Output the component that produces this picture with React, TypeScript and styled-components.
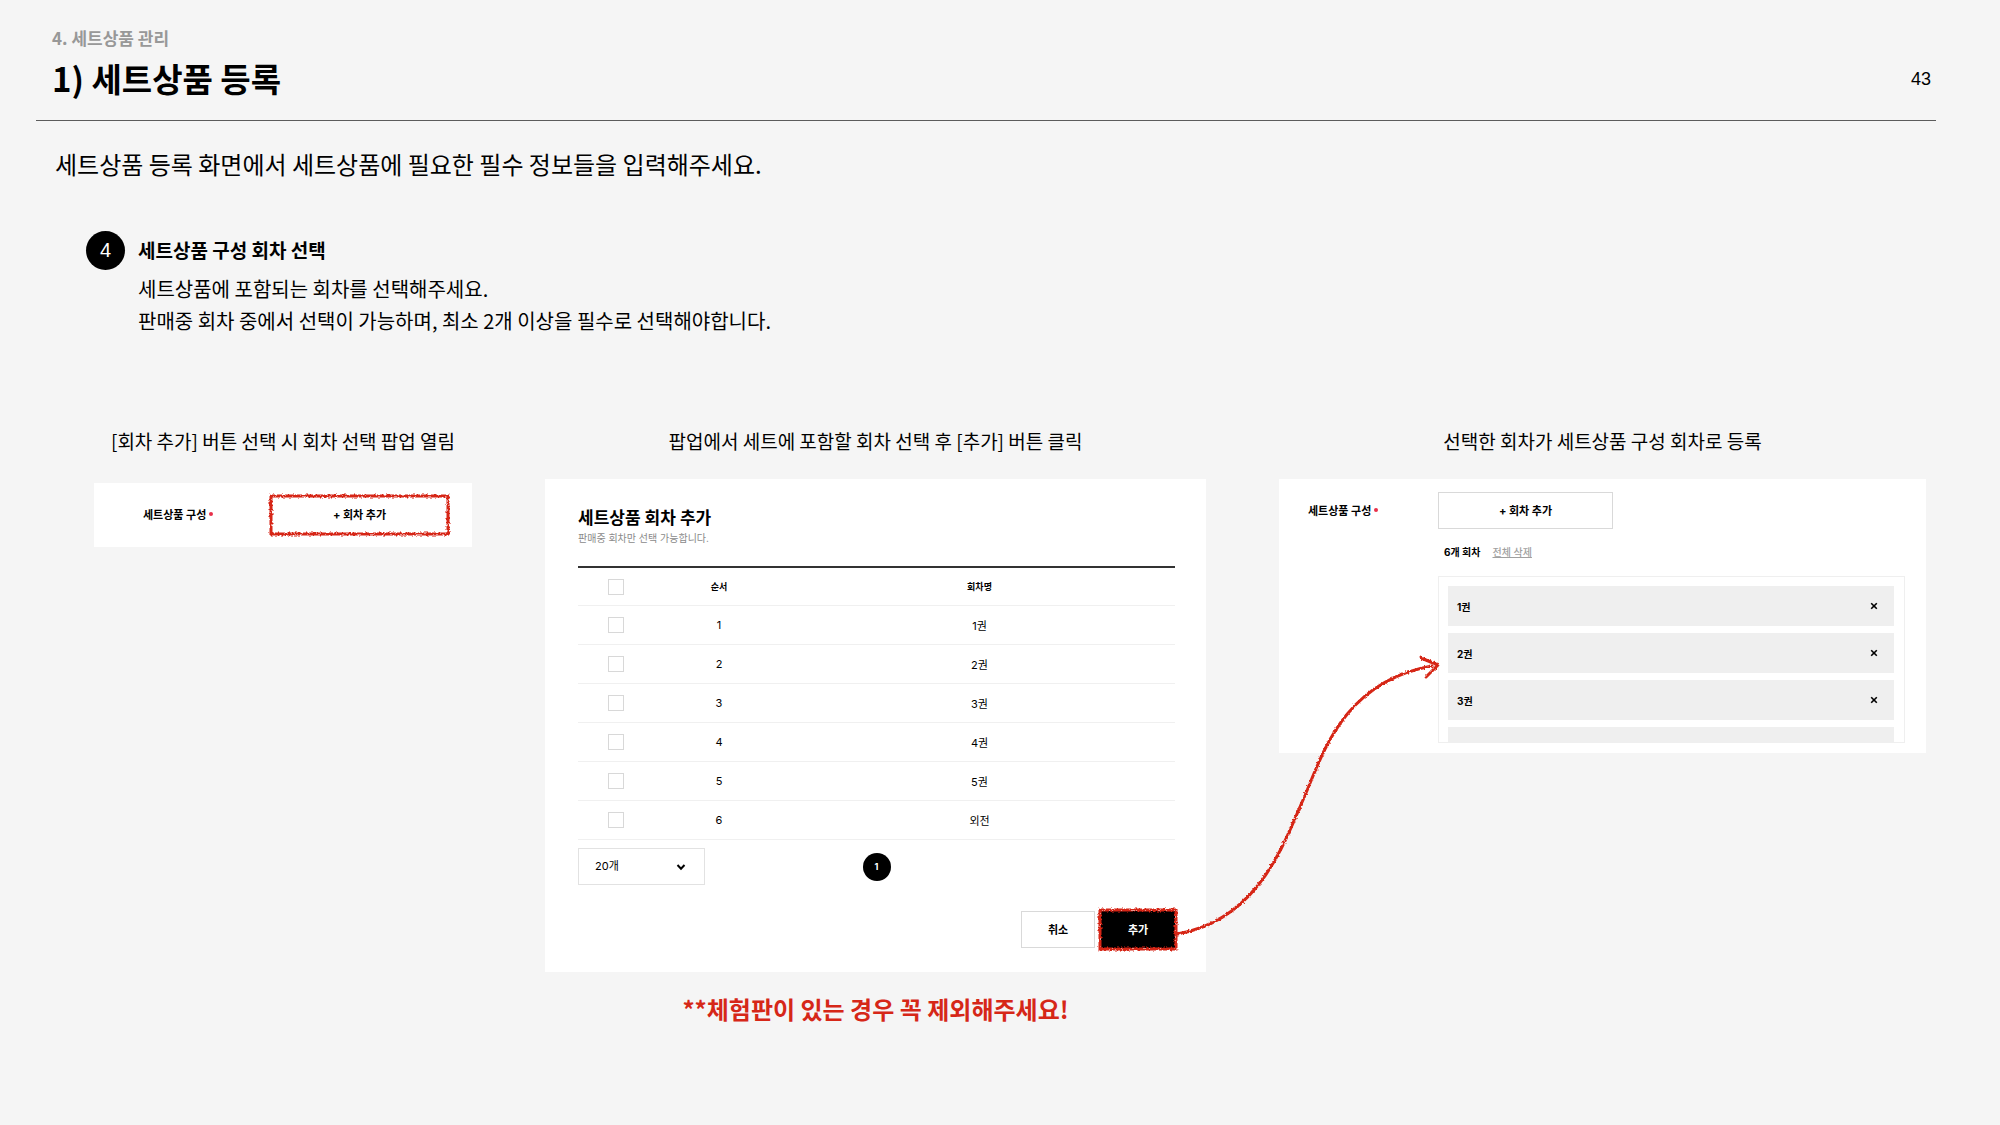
import React from "react";
import styled, { createGlobalStyle } from "styled-components";

const docFont = '"Noto Sans CJK KR", "Liberation Sans", sans-serif';
const uiFont = '"Inter", "Noto Sans CJK KR", sans-serif';
const red = "#d62718";

const GlobalStyle = createGlobalStyle`
  *, *::before, *::after { box-sizing: border-box; }
  body {
    margin: 0;
    background: #f5f5f5;
    color: #000;
    font-family: ${docFont};
  }
  h1, h2, h3, p, ol, ul { margin: 0; padding: 0; }
  ol, ul { list-style: none; }
  button, select, input { font: inherit; color: inherit; margin: 0; }
`;

const Page = styled.main`
  min-height: 100vh;
  padding-bottom: 48px;
`;

const Header = styled.header`
  display: flex;
  align-items: center;
  justify-content: space-between;
  margin: 0 64px 0 36px;
  padding: 26px 5px 20px 16px;
  border-bottom: 1px solid #5c5c5c;
`;

const Breadcrumb = styled.p`
  font-size: 17px;
  line-height: 24px;
  font-weight: 700;
  color: #989898;
`;

const Title = styled.h1`
  margin-top: 6px;
  font-size: 33px;
  line-height: 44px;
  font-weight: 700;
`;

const PageNumber = styled.span`
  font-family: "Liberation Sans", sans-serif;
  font-size: 18px;
  line-height: 24px;
  padding-top: 32px;
`;

const Lead = styled.p`
  margin: 25px 64px 0 55px;
  font-size: 24px;
  line-height: 36px;
`;

const Point = styled.section`
  display: grid;
  grid-template-columns: 39px 1fr;
  column-gap: 13px;
  align-items: center;
  margin: 49px 64px 0 86px;
`;

const PointNumber = styled.span`
  display: flex;
  align-items: center;
  justify-content: center;
  height: 39px;
  border-radius: 50%;
  background: #000;
  color: #fff;
  font-family: "Liberation Sans", sans-serif;
  font-size: 20px;
`;

const PointTitle = styled.h2`
  padding-bottom: 2px;
  font-size: 19px;
  line-height: 32px;
  font-weight: 700;
`;

const PointText = styled.p`
  grid-column: 2;
  margin-top: 3px;
  font-size: 20px;
  line-height: 32px;
`;

const Steps = styled.ol`
  display: grid;
  grid-template-columns: 378fr 661fr 647fr;
  column-gap: 73px;
  align-items: start;
  margin: 90px 74px 0 94px;
`;

const Step = styled.li`
  display: flex;
  flex-direction: column;
`;

const Caption = styled.h3<{ $gap?: number }>`
  margin-bottom: ${(p) => p.$gap ?? 24}px;
  font-size: 19px;
  line-height: 28px;
  font-weight: 400;
  text-align: center;
`;

const Card = styled.div<{ $padding: string }>`
  position: relative;
  padding: ${(p) => p.$padding};
  background: #fff;
  font-family: ${uiFont};
  font-size: 11px;
`;

const Field = styled.div<{ $label: number; $row: number }>`
  display: grid;
  grid-template-columns: ${(p) => p.$label}px 1fr;
  align-items: start;

  & > :first-child { height: ${(p) => p.$row}px; }
`;

const FieldLabel = styled.div`
  display: flex;
  align-items: center;
  gap: 3px;
  padding-bottom: 2px;
  font-weight: 700;
`;

const Required = styled.span`
  width: 4px;
  height: 4px;
  border-radius: 50%;
  background: #e8304a;
`;

const Button = styled.button<{ $dark?: boolean; $plain?: boolean; $width?: string; $height?: number }>`
  position: relative;
  width: ${(p) => p.$width ?? "100%"};
  height: ${(p) => p.$height ?? 37}px;
  padding: 0 0 2px;
  border: 1px solid ${(p) => (p.$dark ? "#000" : p.$plain ? "#fff" : "#d9d9d9")};
  background: ${(p) => (p.$dark ? "#000" : "#fff")};
  color: ${(p) => (p.$dark ? "#fff" : "#000")};
  font-weight: 700;
  cursor: pointer;
`;

const FrameSvg = styled.svg<{ $out: number }>`
  position: absolute;
  inset: ${(p) => -p.$out}px;
  width: calc(100% + ${(p) => p.$out * 2}px);
  height: calc(100% + ${(p) => p.$out * 2}px);
  overflow: visible;
  pointer-events: none;

  rect {
    width: 100%;
    height: 100%;
  }
`;

const ArrowSvg = styled.svg`
  position: absolute;
  left: -119px;
  top: 161px;
  pointer-events: none;
`;

const FilterSvg = styled.svg`
  position: absolute;
  width: 0;
  height: 0;
`;

const PopupTitle = styled.h4`
  margin: 0;
  font-size: 17px;
  line-height: 24px;
  font-weight: 700;
`;

const PopupNote = styled.p`
  margin-top: 1px;
  font-size: 10px;
  line-height: 14px;
  color: #8a8a8a;
`;

const Table = styled.table`
  width: 100%;
  margin-top: 21px;
  table-layout: fixed;
  border-spacing: 0;
  border-top: 2px solid #333;
  text-align: center;

  th, td {
    height: 39px;
    padding: 0;
    border-bottom: 1px solid #f0f0f0;
    vertical-align: middle;
  }
  th {
    height: 38px;
    font-size: 9px;
    font-weight: 700;
  }
`;

const CheckColumn = styled.col`
  width: 76px;
`;

const OrderColumn = styled.col`
  width: 130px;
`;

const Check = styled.input`
  display: block;
  width: 16px;
  height: 16px;
  margin: 0 auto;
  appearance: none;
  border: 1px solid #d8d8d8;
  background: #fff;

  &:checked { background: #000; }
`;

const Pager = styled.div`
  display: grid;
  grid-template-columns: 1fr auto 1fr;
  align-items: center;
  margin-top: 8px;
`;

const SelectBox = styled.div`
  position: relative;
  width: 127px;

  select {
    width: 100%;
    height: 37px;
    padding: 0 16px 2px;
    appearance: none;
    border: 1px solid #e2e2e2;
    border-radius: 0;
    background: #fff;
  }
  svg {
    position: absolute;
    right: 19px;
    top: 14px;
    pointer-events: none;
  }
`;

const PageButton = styled.button`
  width: 28px;
  height: 28px;
  padding: 0;
  border: 0;
  border-radius: 50%;
  background: #000;
  color: #fff;
  font-size: 9px;
  font-weight: 700;
`;

const Actions = styled.div`
  display: flex;
  justify-content: flex-end;
  gap: 6px;
  margin-top: 26px;
`;

const Warning = styled.p`
  margin-top: 19px;
  font-size: 24px;
  line-height: 36px;
  font-weight: 700;
  color: ${red};
  text-align: center;
`;

const Summary = styled.div`
  display: flex;
  gap: 12px;
  margin-top: 15px;
  padding-left: 6px;
  font-size: 10px;
  line-height: 16px;
  font-weight: 700;
`;

const ClearButton = styled.button`
  padding: 0;
  border: 0;
  background: none;
  color: #a0a0a0;
  font-size: 10px;
  font-weight: 500;
  text-decoration: underline;
`;

const Picked = styled.ul`
  display: flex;
  flex-direction: column;
  gap: 7px;
  height: 167px;
  margin-top: 16px;
  padding: 9px 10px 9px 9px;
  overflow-y: auto;
  scrollbar-width: none;
  border: 1px solid #efefef;
`;

const PickedItem = styled.li`
  display: flex;
  flex: none;
  align-items: center;
  justify-content: space-between;
  height: 40px;
  padding: 0 16px 0 9px;
  background: #efefef;
  font-size: 10px;
  font-weight: 700;
`;

const RemoveButton = styled.button`
  display: flex;
  padding: 0;
  border: 0;
  background: none;
`;

const volumes = ["1권", "2권", "3권", "4권", "5권", "외전"];

function CrayonFrame({ out }: { out: number }) {
  return (
    <FrameSvg $out={out} aria-hidden="true">
      <rect fill="none" stroke={red} strokeWidth="3" filter="url(#crayon)" />
    </FrameSvg>
  );
}

function CrayonFilters() {
  return (
    <FilterSvg aria-hidden="true">
      <filter id="crayon" x="-10" y="-10" width="400" height="400" filterUnits="userSpaceOnUse">
        <feTurbulence type="fractalNoise" baseFrequency="0.45" numOctaves="2" seed="4" result="noise" />
        <feDisplacementMap in="SourceGraphic" in2="noise" scale="4" xChannelSelector="R" yChannelSelector="G" />
      </filter>
      <filter id="crayon-soft" x="0" y="0" width="400" height="400" filterUnits="userSpaceOnUse">
        <feTurbulence type="fractalNoise" baseFrequency="0.5" numOctaves="2" seed="7" result="noise" />
        <feDisplacementMap in="SourceGraphic" in2="noise" scale="3" xChannelSelector="R" yChannelSelector="G" />
      </filter>
    </FilterSvg>
  );
}

function Arrow() {
  return (
    <ArrowSvg width="290" height="310" viewBox="0 0 290 310" aria-hidden="true">
      <g fill="none" stroke={red} strokeWidth="3" strokeLinecap="round" strokeLinejoin="round" filter="url(#crayon-soft)">
        <path d="M17 294C100 280 125 200 143 160C161 120 180 42 272 26" />
        <path d="M261 18L278 25L266 37" />
      </g>
    </ArrowSvg>
  );
}

function SetLabel() {
  return (
    <FieldLabel>
      세트상품 구성
      <Required />
    </FieldLabel>
  );
}

function AddPopup() {
  return (
    <Card $padding="27px 31px 24px 33px">
      <PopupTitle>세트상품 회차 추가</PopupTitle>
      <PopupNote>판매중 회차만 선택 가능합니다.</PopupNote>
      <Table>
        <colgroup>
          <CheckColumn />
          <OrderColumn />
          <col />
        </colgroup>
        <thead>
          <tr>
            <th><Check type="checkbox" aria-label="전체 선택" /></th>
            <th>순서</th>
            <th>회차명</th>
          </tr>
        </thead>
        <tbody>
          {volumes.map((name, i) => (
            <tr key={name}>
              <td><Check type="checkbox" aria-label={name} /></td>
              <td>{i + 1}</td>
              <td>{name}</td>
            </tr>
          ))}
        </tbody>
      </Table>
      <Pager>
        <SelectBox>
          <select aria-label="페이지당 개수">
            <option>20개</option>
          </select>
          <svg width="10" height="10" viewBox="0 0 10 10" fill="none" stroke="#000" strokeWidth="2">
            <path d="M1.5 3L5 6.7L8.5 3" />
          </svg>
        </SelectBox>
        <PageButton type="button">1</PageButton>
      </Pager>
      <Actions>
        <Button type="button" $width="74px">취소</Button>
        <Button type="button" $width="74px" $dark>
          추가
          <CrayonFrame out={2} />
        </Button>
      </Actions>
    </Card>
  );
}

function PickedVolumes() {
  return (
    <Card $padding="13px 21px 10px 29px">
      <Field $label={130} $row={37}>
        <SetLabel />
        <div>
          <Button type="button" $width="175px">+ 회차 추가</Button>
          <Summary>
            <span>6개 회차</span>
            <ClearButton type="button">전체 삭제</ClearButton>
          </Summary>
          <Picked>
            {volumes.map((name) => (
              <PickedItem key={name}>
                {name}
                <RemoveButton type="button" aria-label={`${name} 삭제`}>
                  <svg width="8" height="8" viewBox="0 0 8 8" stroke="#000" strokeWidth="1.6">
                    <path d="M1.2 1.2L6.8 6.8M6.8 1.2L1.2 6.8" />
                  </svg>
                </RemoveButton>
              </PickedItem>
            ))}
          </Picked>
        </div>
      </Field>
      <Arrow />
    </Card>
  );
}

export default function App() {
  return (
    <Page>
      <GlobalStyle />
      <CrayonFilters />
      <Header>
        <div>
          <Breadcrumb>4. 세트상품 관리</Breadcrumb>
          <Title>1) 세트상품 등록</Title>
        </div>
        <PageNumber>43</PageNumber>
      </Header>
      <Lead>세트상품 등록 화면에서 세트상품에 필요한 필수 정보들을 입력해주세요.</Lead>
      <Point>
        <PointNumber>4</PointNumber>
        <PointTitle>세트상품 구성 회차 선택</PointTitle>
        <PointText>
          세트상품에 포함되는 회차를 선택해주세요.
          <br />
          판매중 회차 중에서 선택이 가능하며, 최소 2개 이상을 필수로 선택해야합니다.
        </PointText>
      </Point>
      <Steps>
        <Step>
          <Caption $gap={28}>[회차 추가] 버튼 선택 시 회차 선택 팝업 열림</Caption>
          <Card $padding="12px 23px 12px 49px">
            <Field $label={127} $row={40}>
              <SetLabel />
              <Button type="button" $plain $height={40}>
                + 회차 추가
                <CrayonFrame out={0} />
              </Button>
            </Field>
          </Card>
        </Step>
        <Step>
          <Caption>팝업에서 세트에 포함할 회차 선택 후 [추가] 버튼 클릭</Caption>
          <AddPopup />
          <Warning>**체험판이 있는 경우 꼭 제외해주세요!</Warning>
        </Step>
        <Step>
          <Caption>선택한 회차가 세트상품 구성 회차로 등록</Caption>
          <PickedVolumes />
        </Step>
      </Steps>
    </Page>
  );
}
